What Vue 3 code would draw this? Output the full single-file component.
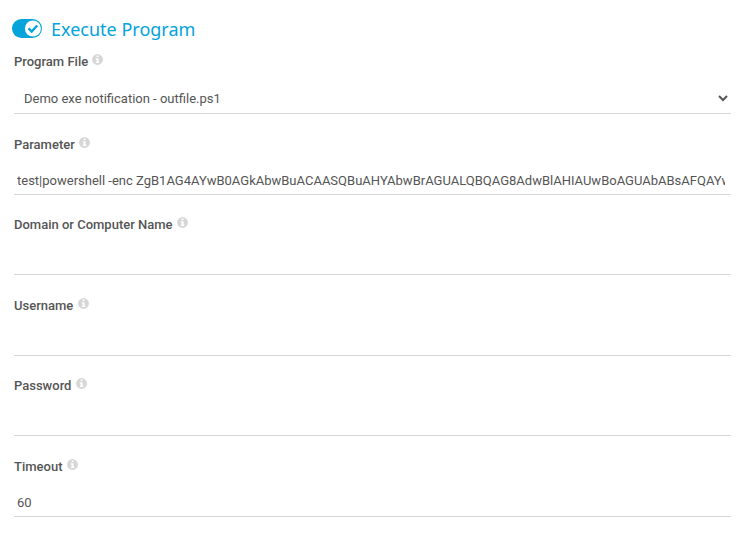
<script setup>
import { ref } from 'vue'

const enabled = ref(true)
const fields = ref([
  { id: 'program', label: 'Program File', type: 'select', value: 'Demo exe notification - outfile.ps1' },
  { id: 'parameter', label: 'Parameter', type: 'text', value: 'test|powershell -enc ZgB1AG4AYwB0AGkAbwBuACAASQBuAHYAbwBrAGUALQBQAG8AdwBlAHIAUwBoAGUAbABsAFQAYwBwAA==' },
  { id: 'domain', label: 'Domain or Computer Name', type: 'text', value: '' },
  { id: 'username', label: 'Username', type: 'text', value: '' },
  { id: 'password', label: 'Password', type: 'password', value: '' },
  { id: 'timeout', label: 'Timeout', type: 'text', value: '60' }
])
</script>

<template>
  <form class="panel" @submit.prevent>
    <header class="heading" @click="enabled = !enabled">
      <svg class="toggle" width="30" height="20" viewBox="0 0 30 20">
        <rect x="0" y="0" width="30" height="19" rx="9.5" fill="#03a3dc" />
        <circle cx="20.9" cy="9.5" r="8" fill="#fff" />
        <path d="M16.5 9.4l3.2 3.1 5.5-6" fill="none" stroke="#03a3dc" stroke-width="2.4" />
      </svg>
      <h1>Execute Program</h1>
    </header>
    <div v-for="f in fields" :key="f.id" class="field" :class="f.id">
      <div class="caption">
        <label :for="f.id">{{ f.label }}</label>
        <svg class="info" width="11" height="11" viewBox="0 0 11 11">
          <circle cx="5.5" cy="5.5" r="5.4" fill="#d6d6d6" />
          <path d="M4.6 1.6h2v1.5h-2zM3.8 4.2h2.8v3.5h.8v1.2H3.8V7.7h.8V5.4h-.8z" fill="#fff" />
        </svg>
      </div>
      <select v-if="f.type === 'select'" :id="f.id" v-model="f.value">
        <option>{{ f.value }}</option>
      </select>
      <input v-else :id="f.id" v-model="f.value" :type="f.type" spellcheck="false" />
    </div>
  </form>
</template>

<style>
body {
  background: #fff;
}
</style>

<style scoped>
.panel {
  padding: 18px 25px 16px 14px;
  font-family: Roboto, sans-serif;
  font-size: 13px;
  color: #555;
}
.heading {
  display: flex;
  align-items: center;
  gap: 9px;
  height: 22px;
  margin-left: -2px;
}
.toggle,
.info {
  display: block;
  flex: none;
}
h1 {
  margin: 0;
  font: 400 18px/24px "Noto Sans", sans-serif;
  color: #03a3dc;
}
.field {
  display: flex;
  flex-direction: column;
  justify-content: space-between;
  box-sizing: border-box;
  height: 81px;
  padding-top: 22px;
}
.field.program {
  height: 74px;
  padding-top: 13px;
}
.field.domain,
.field.password {
  height: 80px;
  padding-top: 21px;
}
.caption {
  display: flex;
  align-items: flex-start;
  gap: 4.3px;
  height: 18px;
}
label {
  font-weight: 500;
  line-height: 18px;
}
.info {
  margin-top: 1px;
}
input,
select {
  box-sizing: border-box;
  width: 100%;
  height: 29px;
  margin: 0;
  border: 0;
  border-bottom: 1px solid #d6d6d6;
  border-radius: 0;
  outline: 0;
  background: transparent;
  font: inherit;
  color: inherit;
}
input {
  padding: 0 6px 0 3px;
}
select {
  height: 31px;
  padding: 0 0 0 6px;
}
</style>
